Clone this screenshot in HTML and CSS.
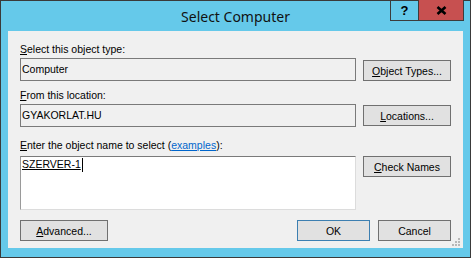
FILE: index.html
```
<!DOCTYPE html>
<html lang="en">
<head>
    <meta charset="UTF-8">
    <title>Select Computer</title>
    <link rel="stylesheet" href="styles.css">
</head>
<body>
    <div class="window">
        <div class="titlebar">
            <span class="title">Select Computer</span>
            <div class="caption-buttons">
                <span class="cap-btn help">?</span>
                <span class="cap-btn close">
                    <svg width="11" height="9" viewBox="0 0 11 9">
                        <path d="M1.5 1 L9.5 8 M9.5 1 L1.5 8" stroke="#000" stroke-width="2.6" fill="none"/>
                    </svg>
                </span>
            </div>
        </div>

        <div class="client">
            <div class="label"><u>S</u>elect this object type:</div>
            <div class="row end">
                <div class="field">Computer</div>
                <button class="btn"><u>O</u>bject Types...</button>
            </div>

            <div class="label second"><u>F</u>rom this location:</div>
            <div class="row">
                <div class="field">GYAKORLAT.HU</div>
                <button class="btn"><u>L</u>ocations...</button>
            </div>

            <div class="label third"><u>E</u>nter the object name to select (<a href="#" class="link">examples</a>):</div>
            <div class="row top">
                <div class="names"><span class="entry">SZERVER-1</span><span class="caret"></span></div>
                <button class="btn"><u>C</u>heck Names</button>
            </div>

            <div class="footer">
                <button class="btn"><u>A</u>dvanced...</button>
                <div class="footer-right">
                    <button class="btn small default">OK</button>
                    <button class="btn small">Cancel</button>
                </div>
            </div>

            <svg class="grip" width="10" height="10" viewBox="0 0 10 10">
                <rect x="7" y="1" width="2" height="2" fill="#b8b8b8"/>
                <rect x="4" y="4" width="2" height="2" fill="#b8b8b8"/>
                <rect x="7" y="4" width="2" height="2" fill="#b8b8b8"/>
                <rect x="1" y="7" width="2" height="2" fill="#b8b8b8"/>
                <rect x="4" y="7" width="2" height="2" fill="#b8b8b8"/>
                <rect x="7" y="7" width="2" height="2" fill="#b8b8b8"/>
            </svg>
        </div>
    </div>
</body>
</html>
```

FILE: styles.css
```
body {
    margin: 0;
    padding: 0;
    font-family: 'Liberation Sans', Arial, sans-serif;
    font-size: 10.5px;
    color: #000;
}

.window {
    width: 471px;
    height: 258px;
    box-sizing: border-box;
    background: #65c9ea;
    border: 1px solid #3a3a3a;
    padding: 0 7px 9px 7px;
}

.titlebar {
    position: relative;
    height: 30px;
    display: flex;
    align-items: center;
    justify-content: center;
}

.title {
    font-family: 'Noto Sans', sans-serif;
    font-size: 14px;
    color: #111;
    margin-top: 1px;
}

.caption-buttons {
    position: absolute;
    top: -1px;
    right: -1px;
    display: flex;
}

.cap-btn {
    height: 21px;
    box-sizing: border-box;
    border: 1px solid #3c3c3c;
    border-top: none;
    display: flex;
    align-items: center;
    justify-content: center;
}

.help {
    width: 28px;
    border-right: none;
    font-weight: bold;
    font-size: 13px;
    padding-top: 1px;
}

.close {
    width: 46px;
    background: #c75050;
}

.client {
    position: relative;
    height: 217px;
    box-sizing: border-box;
    background: #f0f0f0;
    padding: 12px 12px 0 12px;
}

.label {
    height: 13px;
    line-height: 13px;
    margin-bottom: 2px;
    white-space: nowrap;
}

.label.second {
    margin-top: 8px;
}

.label.third {
    margin-top: 12px;
    margin-bottom: 4px;
}

.link {
    color: #0066cc;
}

.row {
    display: flex;
    align-items: center;
    gap: 7px;
}

.row.end {
    align-items: flex-end;
}

.row.top {
    align-items: flex-start;
}

.field {
    width: 336px;
    height: 23px;
    box-sizing: border-box;
    border: 1px solid #7a7a7a;
    padding: 0 1px;
    line-height: 21px;
}

.names {
    width: 336px;
    height: 54px;
    box-sizing: border-box;
    background: #fff;
    border: 1px solid #dcdcdc;
    border-top-color: #7a7a7a;
    border-left-color: #9a9a9a;
    padding: 1px;
    line-height: 13px;
    display: flex;
    align-items: flex-start;
}

.entry {
    text-decoration: underline;
}

.caret {
    width: 1px;
    height: 14px;
    background: #000;
    margin-left: 1px;
}

.btn {
    width: 88px;
    height: 21px;
    box-sizing: border-box;
    background: #e1e1e1;
    border: 1px solid #707070;
    padding: 0;
    font-family: inherit;
    font-size: 10.5px;
    color: #000;
}

.btn.small {
    width: 73px;
}

.btn.default {
    border-color: #3c7fb1;
}

.footer {
    display: flex;
    justify-content: space-between;
    margin-top: 10px;
}

.footer-right {
    display: flex;
    gap: 8px;
}

.grip {
    position: absolute;
    right: 2px;
    bottom: 1px;
}
```
